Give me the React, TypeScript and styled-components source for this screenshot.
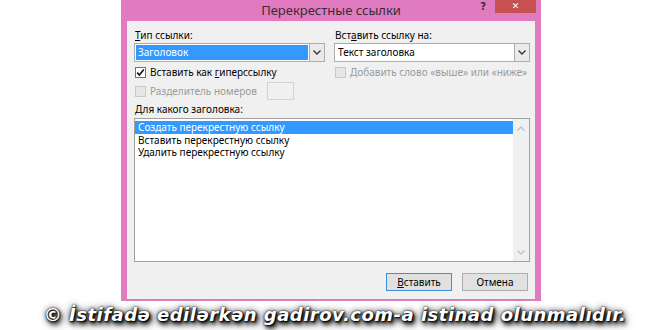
import React from "react";
import styled, { createGlobalStyle } from "styled-components";

const GlobalStyle = createGlobalStyle`
    html, body {
        margin: 0;
        padding: 0;
        background: #ffffff;
    }
    body {
        font-family: "Noto Sans", "Liberation Sans", sans-serif;
    }
`;

const PINK = "#df7bbe";

const ChevronDown: React.FC<{ color?: string }> = ({ color = "#333" }) => (
    <svg width="8" height="5" viewBox="0 0 8 5">
        <polyline points="0.5,0.5 4,4 7.5,0.5" fill="none" stroke={color} strokeWidth="1.3" />
    </svg>
);

const ChevronUp: React.FC<{ color?: string }> = ({ color = "#333" }) => (
    <svg width="8" height="5" viewBox="0 0 8 5">
        <polyline points="0.5,4.5 4,1 7.5,4.5" fill="none" stroke={color} strokeWidth="1.3" />
    </svg>
);

const CheckMark = () => (
    <svg width="9" height="9" viewBox="0 0 9 9">
        <polyline points="1.2,4.6 3.4,7 7.8,1.6" fill="none" stroke="#111" strokeWidth="1.6" />
    </svg>
);

const Combo: React.FC<{ value: string; selected?: boolean }> = ({ value, selected }) => (
    <Style.Combo>
        <Style.ComboValue $selected={selected}>{value}</Style.ComboValue>
        <Style.ComboArrow>
            <ChevronDown />
        </Style.ComboArrow>
    </Style.Combo>
);

const Check: React.FC<{ checked?: boolean; disabled?: boolean; children: React.ReactNode }> = ({
    checked,
    disabled,
    children,
}) => (
    <Style.CheckRow>
        <Style.Box $disabled={disabled}>{checked && <CheckMark />}</Style.Box>
        <Style.CheckText $disabled={disabled}>{children}</Style.CheckText>
    </Style.CheckRow>
);

const items = ["Создать перекрестную ссылку", "Вставить перекрестную ссылку", "Удалить перекрестную ссылку"];

export default function App() {
    return (
        <>
            <GlobalStyle />
            <Style.Page>
                <Style.Window>
                    <Style.TitleBar>
                        <span />
                        <Style.Title>Перекрестные ссылки</Style.Title>
                        <Style.Controls>
                            <Style.Help>?</Style.Help>
                            <Style.Close>✕</Style.Close>
                        </Style.Controls>
                    </Style.TitleBar>
                    <Style.Client>
                        <Style.TopGrid>
                            <Style.Column>
                                <Style.Label>
                                    <u>Т</u>ип ссылки:
                                </Style.Label>
                                <Combo value="Заголовок" selected />
                                <Check checked>
                                    Вставить как <u>г</u>иперссылку
                                </Check>
                                <Style.SplitRow>
                                    <Check disabled>Разделитель номеров</Check>
                                    <Style.SmallInput />
                                </Style.SplitRow>
                            </Style.Column>
                            <Style.Column>
                                <Style.Label>
                                    Вст<u>а</u>вить ссылку на:
                                </Style.Label>
                                <Combo value="Текст заголовка" />
                                <Check disabled>Добавить слово «выше» или «ниже»</Check>
                            </Style.Column>
                        </Style.TopGrid>
                        <Style.ListLabel>Для какого заголовка:</Style.ListLabel>
                        <Style.ListBox>
                            <Style.ListItems>
                                {items.map((item, i) => (
                                    <Style.ListItem key={item} $selected={i === 0}>
                                        {item}
                                    </Style.ListItem>
                                ))}
                            </Style.ListItems>
                            <Style.ScrollBar>
                                <ChevronUp color="#c2c2c2" />
                                <ChevronDown color="#c2c2c2" />
                            </Style.ScrollBar>
                        </Style.ListBox>
                        <Style.Buttons>
                            <Style.Button $primary>
                                <u>В</u>ставить
                            </Style.Button>
                            <Style.Button>Отмена</Style.Button>
                        </Style.Buttons>
                    </Style.Client>
                </Style.Window>
                <Style.Watermark>© İstifadə edilərkən gadirov.com-a istinad olunmalıdır.</Style.Watermark>
            </Style.Page>
        </>
    );
}

const Style = {
    Page: styled.div`
        width: 660px;
        height: 330px;
        box-sizing: border-box;
        padding-left: 2px;
        overflow: hidden;
        display: flex;
        flex-direction: column;
        align-items: center;
    `,

    Window: styled.div`
        width: 420px;
        background: ${PINK};
        padding: 0 6px 2px 6px;
        box-sizing: border-box;
        display: flex;
        flex-direction: column;
    `,

    TitleBar: styled.div`
        height: 21px;
        margin: 0 -6px;
        display: grid;
        grid-template-columns: 1fr auto 1fr;
        align-items: start;
    `,

    Title: styled.div`
        font-size: 13px;
        line-height: 21px;
        color: #3a2a36;
    `,

    Controls: styled.div`
        display: flex;
        justify-content: flex-end;
        align-items: flex-start;
        gap: 9px;
        padding-right: 5px;
    `,

    Help: styled.span`
        font-family: "DejaVu Sans", sans-serif;
        font-weight: bold;
        font-size: 10px;
        line-height: 13px;
        color: #3a2a36;
    `,

    Close: styled.div`
        width: 41px;
        height: 13px;
        background: #c75050;
        color: #ffffff;
        font-family: "DejaVu Sans", sans-serif;
        font-weight: bold;
        font-size: 9px;
        line-height: 13px;
        text-align: center;
    `,

    Client: styled.div`
        height: 278px;
        box-sizing: border-box;
        background: #f0f0f0;
        padding: 8px 5px 0 7px;
        display: flex;
        flex-direction: column;
        font-size: 10px;
        color: #000;
    `,

    TopGrid: styled.div`
        display: grid;
        grid-template-columns: 191px 196px;
        column-gap: 9px;
    `,

    Column: styled.div`
        display: flex;
        flex-direction: column;
    `,

    Label: styled.div`
        line-height: 13px;
        height: 13px;
        padding-left: 1px;
        white-space: nowrap;

        u {
            text-underline-offset: 1px;
        }
    `,

    Combo: styled.div`
        margin-top: 1px;
        height: 19px;
        box-sizing: border-box;
        border: 1px solid #abadb3;
        background: #ffffff;
        display: flex;
    `,

    ComboValue: styled.div<{ $selected?: boolean }>`
        flex: 1;
        margin: 1px;
        padding-left: 2px;
        line-height: 15px;
        background: ${(p) => (p.$selected ? "#3399ff" : "transparent")};
        color: ${(p) => (p.$selected ? "#ffffff" : "#000000")};
    `,

    ComboArrow: styled.div`
        width: 14px;
        border-left: 1px solid #acacac;
        background: #eaeaea;
        display: flex;
        align-items: center;
        justify-content: center;
    `,

    CheckRow: styled.div`
        margin-top: 3px;
        height: 14px;
        padding-left: 1px;
        display: flex;
        align-items: center;
        gap: 4px;
        white-space: nowrap;
    `,

    Box: styled.div<{ $disabled?: boolean }>`
        width: 11px;
        height: 11px;
        box-sizing: border-box;
        border: 1px solid ${(p) => (p.$disabled ? "#c9c9c9" : "#707070")};
        background: ${(p) => (p.$disabled ? "#e6e6e6" : "#ffffff")};
        display: flex;
        align-items: center;
        justify-content: center;
    `,

    CheckText: styled.span<{ $disabled?: boolean }>`
        color: ${(p) => (p.$disabled ? "#9b9b9b" : "#000000")};
    `,

    SplitRow: styled.div`
        margin-top: 3px;
        height: 18px;
        display: flex;
        align-items: center;
        gap: 10px;

        & > div {
            margin-top: 0;
        }
    `,

    SmallInput: styled.div`
        width: 27px;
        height: 18px;
        box-sizing: border-box;
        border: 1px solid #d3d3d3;
        background: #f0f0f0;
    `,

    ListLabel: styled.div`
        margin-top: 3px;
        height: 13px;
        line-height: 13px;
        padding-left: 1px;
    `,

    ListBox: styled.div`
        margin-top: 2px;
        height: 144px;
        box-sizing: border-box;
        border: 1px solid #a0a0a0;
        background: #ffffff;
        display: flex;
    `,

    ListItems: styled.div`
        flex: 1;
        padding-top: 2px;
        display: flex;
        flex-direction: column;
    `,

    ListItem: styled.div<{ $selected?: boolean }>`
        height: 12.5px;
        line-height: 12.5px;
        padding-left: 3px;
        white-space: nowrap;
        background: ${(p) => (p.$selected ? "#3399ff" : "transparent")};
        color: ${(p) => (p.$selected ? "#ffffff" : "#000000")};
    `,

    ScrollBar: styled.div`
        width: 16px;
        background: #f0f0f0;
        display: flex;
        flex-direction: column;
        align-items: center;
        justify-content: space-between;
        padding: 7px 0 6px;
    `,

    Buttons: styled.div`
        margin-top: 11px;
        padding-right: 2px;
        display: flex;
        justify-content: flex-end;
        gap: 10px;
    `,

    Button: styled.div<{ $primary?: boolean }>`
        width: 66px;
        height: 18px;
        box-sizing: border-box;
        border: 1px solid ${(p) => (p.$primary ? "#3c8fdc" : "#adadad")};
        background: #e1e1e1;
        text-align: center;
        line-height: 16px;
    `,

    Watermark: styled.div`
        margin-top: 3px;
        padding-left: 8px;
        font-family: "DejaVu Sans", sans-serif;
        font-weight: bold;
        font-style: italic;
        font-size: 18px;
        line-height: 22px;
        letter-spacing: 0.5px;
        color: #ffffff;
        white-space: nowrap;
        text-shadow: 0 0 2px #000, 1px 1px 2px #000, 2px 3px 4px #000, 0 0 7px rgba(0, 0, 0, 0.8),
            3px 4px 8px rgba(0, 0, 0, 0.6);
    `,
};
